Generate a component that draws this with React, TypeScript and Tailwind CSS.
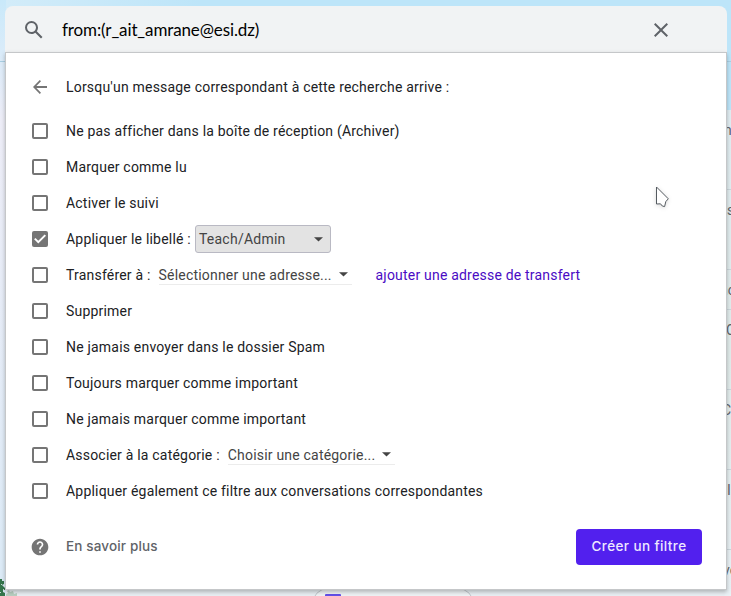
import type { ReactNode } from "react";

function Checkbox({ checked = false }: { checked?: boolean }) {
  return (
    <span
      role="checkbox"
      aria-checked={checked}
      className={
        checked
          ? "block h-4 w-4 shrink-0 rounded-[2px] bg-[#757575]"
          : "block h-4 w-4 shrink-0 rounded-[2px] border-2 border-[#757575] bg-white"
      }
    >
      {checked && (
        <svg viewBox="0 0 16 16" className="block h-4 w-4" fill="none" stroke="#fff" strokeWidth="2">
          <path d="M2.8 7.6 6.3 11.1 13.3 4.1" />
        </svg>
      )}
    </span>
  );
}

function Caret() {
  return (
    <svg viewBox="0 0 9 5" className="h-[5px] w-[9px] shrink-0" fill="#444">
      <path d="M0 0.3h9L4.5 4.6z" />
    </svg>
  );
}

function Row({ checked, children }: { checked?: boolean; children: ReactNode }) {
  return (
    <div className="flex h-9 items-center pl-[26px]">
      <Checkbox checked={checked} />
      <div className="ml-[18px] flex items-center whitespace-nowrap">{children}</div>
    </div>
  );
}

function Backdrop() {
  return (
    <div className="absolute inset-0 bg-[#e8eff3]">
      <div className="absolute left-0 top-0 h-[110px] w-full bg-[#bde5f9]" />
      <div className="absolute left-0 top-0 h-[60px] w-[200px] bg-linear-to-r from-[#d3ecf9] to-[#bde5f9]" />
      <div className="absolute left-0 top-0 h-[596px] w-[6px] bg-linear-to-b from-[#c9e9fa] via-[#eeeef8] via-20% to-[#dcebf7]" />
      <div className="absolute left-0 top-[61px] h-px w-full bg-[#a9cfe3]" />
      <div className="absolute right-0 top-[110px] h-[486px] w-[6px] bg-linear-to-b from-[#e1edf2] via-[#e1ebea] to-[#e9f1f5]" />
      <div className="absolute right-0 top-[189px] h-px w-[5px] bg-[#cbd6dc]" />
      <div className="absolute right-0 top-[269px] h-px w-[5px] bg-[#cbd6dc]" />
      <div className="absolute right-0 top-[309px] h-px w-[5px] bg-[#cbd6dc]" />
      <div className="absolute right-0 top-[389px] h-px w-[5px] bg-[#cbd6dc]" />
      <div className="absolute right-0 top-[469px] h-px w-[5px] bg-[#cbd6dc]" />
      <div className="absolute right-0 top-[549px] h-px w-[5px] bg-[#cbd6dc]" />
      <div className="text-sm leading-4 text-[#5f6368]">
        <span className="absolute left-[724px] top-[122px]">n</span>
        <span className="absolute left-[727px] top-[202px]">s</span>
        <span className="absolute left-[720px] top-[282px]">nc</span>
        <span className="absolute left-[726px] top-[322px]">C</span>
        <span className="absolute left-[722px] top-[402px]">C</span>
        <span className="absolute left-[727px] top-[482px]">I</span>
        <span className="absolute left-[723px] top-[562px]">ve</span>
      </div>
      <div className="absolute left-[312px] top-[588px] h-8 w-[162px] rounded-2xl border border-[#c0c7cc] bg-[#eef3f5]" />
      <div className="absolute left-[325px] top-[594px] h-3 w-4 rounded-[1px] bg-[#6250e8]" />
      <svg viewBox="0 0 18 18" className="absolute left-0 top-[578px] h-[18px] w-[18px]">
        <path d="M0 1h2v2h2v3l-2 1 3 3v2H3v2l2 1v3H0z" fill="#35764c" />
        <path d="M7 13l2-1 1 2 3-1 1 3 3-1v3H6v-2l2-1z" fill="#b8cfc1" />
        <path d="M1 6h1v1H1zM3 11h1v1H3zM0 14h1v1H0z" fill="#c9ddd4" />
      </svg>
    </div>
  );
}

export default function App() {
  return (
    <div className="relative h-[596px] w-[731px] overflow-hidden font-['Roboto',sans-serif]">
      <Backdrop />
      <div className="relative flex h-full w-[727px] flex-col pl-[5px] pt-[6px]">
        <div className="flex h-[46px] items-center rounded-t-lg bg-[#f1f3f4] pl-[17px] pt-[2px]">
          <svg viewBox="0 0 24 24" className="h-6 w-6 shrink-0" fill="#5f6368">
            <path d="M20.49 19l-5.73-5.73C15.53 12.2 16 10.91 16 9.5A6.5 6.5 0 1 0 9.5 16c1.41 0 2.7-.47 3.77-1.24L19 20.49 20.49 19zM5 9.5C5 7.01 7.01 5 9.5 5S14 7.01 14 9.5 11.99 14 9.5 14 5 11.99 5 9.5z" />
          </svg>
          <span className="ml-4 text-[17px] leading-6 tracking-[-0.12px] text-black font-['Lato',sans-serif]">
            from:(r_ait_amrane@esi.dz)
          </span>
          <svg viewBox="0 0 24 24" className="ml-auto mr-[54px] h-6 w-6 shrink-0" fill="#5f6368">
            <path d="M19 6.41L17.59 5 12 10.59 6.41 5 5 6.41 10.59 12 5 17.59 6.41 19 12 13.41 17.59 19 19 17.59 13.41 12z" />
          </svg>
        </div>
        <main className="flex h-[538px] w-[722px] flex-col border border-[#c5c7c9] bg-white pt-4 text-[14px] leading-5 tracking-[0.2px] text-[#202124] shadow-[0_2px_4px_rgba(0,0,0,0.25)]">
          <div className="mb-2 flex h-9 items-center pl-6">
            <svg viewBox="0 0 20 20" className="h-5 w-5 shrink-0" fill="#757575">
              <path d="M17 9.1H6.4l4.6-4.8L9.8 3 3 10l6.8 7 1.2-1.3-4.6-4.8H17z" />
            </svg>
            <span className="ml-4 whitespace-nowrap">Lorsqu'un message correspondant à cette recherche arrive :</span>
          </div>
          <Row>Ne pas afficher dans la boîte de réception (Archiver)</Row>
          <Row>Marquer comme lu</Row>
          <Row>Activer le suivi</Row>
          <Row checked>
            <span>Appliquer le libellé :</span>
            <button className="ml-1 flex h-7 w-[136px] items-center justify-between rounded-[3px] border border-[#b9b9c3] bg-[#e3e3e3] pl-[3px] pr-[7px] text-[#444]">
              <span className="tracking-[0.25px]">Teach/Admin</span>
              <Caret />
            </button>
          </Row>
          <Row>
            <span>Transférer à :</span>
            <button className="ml-2 flex h-5 w-[193px] items-center justify-between border-b border-[#ececec] pr-1 text-[#444]">
              Sélectionner une adresse...
              <Caret />
            </button>
            <a className="ml-6 text-[#4a0bc4]">ajouter une adresse de transfert</a>
          </Row>
          <Row>Supprimer</Row>
          <Row>Ne jamais envoyer dans le dossier Spam</Row>
          <Row>Toujours marquer comme important</Row>
          <Row>Ne jamais marquer comme important</Row>
          <Row>
            <span>Associer à la catégorie :</span>
            <button className="ml-2 flex h-5 w-[167px] items-center justify-between border-b border-[#ececec] pr-1 text-[#444]">
              Choisir une catégorie...
              <Caret />
            </button>
          </Row>
          <Row>Appliquer également ce filtre aux conversations correspondantes</Row>
          <footer className="mt-5 flex h-9 items-center pl-6 pr-6 font-['Inter',sans-serif] text-[13.5px] font-medium">
            <svg viewBox="0 0 24 24" className="h-5 w-5 shrink-0" fill="#757575">
              <path d="M12 2C6.48 2 2 6.48 2 12s4.48 10 10 10 10-4.48 10-10S17.52 2 12 2zm1 17h-2v-2h2v2zm2.07-7.75l-.9.92C13.45 12.9 13 13.5 13 15h-2v-.5c0-1.1.45-2.1 1.17-2.83l1.24-1.26c.37-.36.59-.86.59-1.41 0-1.1-.9-2-2-2s-2 .9-2 2H8c0-2.21 1.79-4 4-4s4 1.79 4 4c0 .88-.36 1.68-.93 2.25z" />
            </svg>
            <span className="ml-4 pb-0.5 tracking-[0.15px] text-[#5f6368]">En savoir plus</span>
            <button className="ml-auto h-9 w-[126px] rounded-[4px] bg-[#5220ee] pb-0.5 tracking-[0.4px] text-[#eee8ff]">
              Créer un filtre
            </button>
          </footer>
        </main>
      </div>
      <svg viewBox="0 0 14 22" className="absolute left-[655px] top-[185px] h-[23px] w-[14px] drop-shadow-sm" fill="#fff" stroke="#555b60" strokeWidth="1">
        <path d="M1.5 1.5v17l4-.2 1.8 2.2 2.3.6 1.2-5 2.5-2.8z" />
      </svg>
    </div>
  );
}
